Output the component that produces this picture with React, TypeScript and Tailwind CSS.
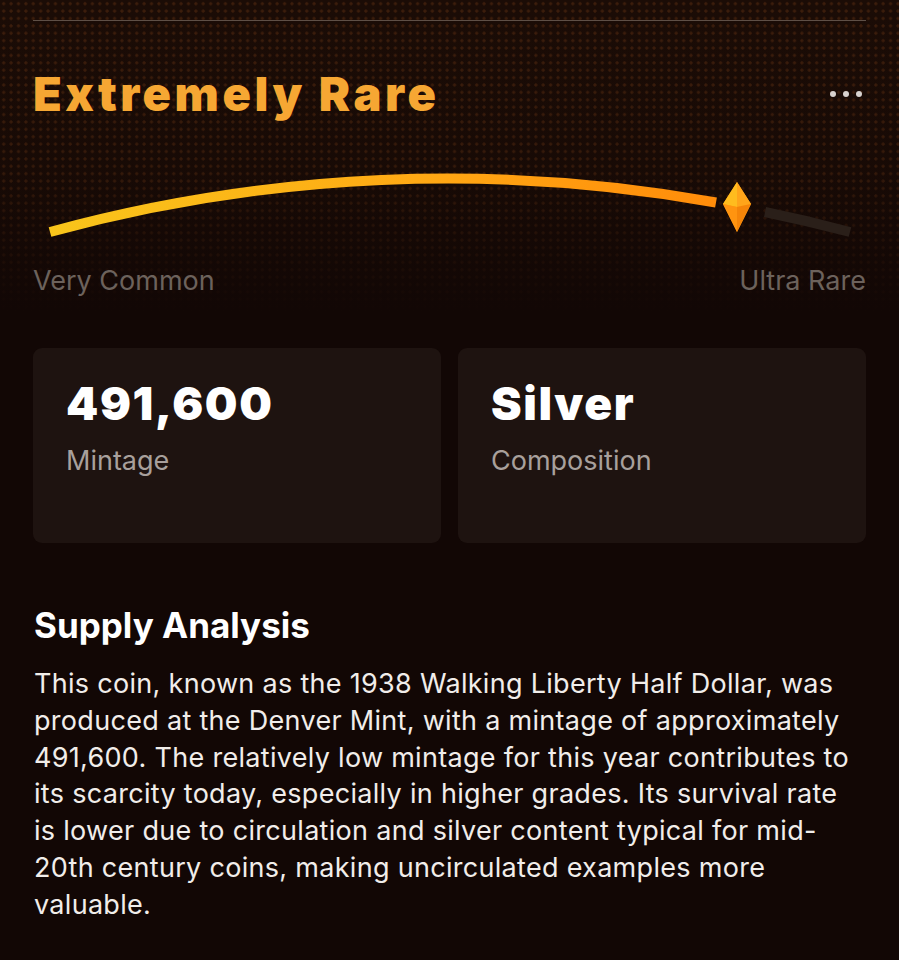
import React from 'react';

const stats = [
  { value: '491,600', label: 'Mintage' },
  { value: 'Silver', label: 'Composition' },
];

const RarityArc: React.FC = () => (
  <svg width="899" height="80" viewBox="0 170 899 80" className="block -mx-[33px]">
    <defs>
      <linearGradient id="arcFill" x1="50" y1="0" x2="716" y2="0" gradientUnits="userSpaceOnUse">
        <stop offset="0" stopColor="#F9C51B" />
        <stop offset="0.55" stopColor="#FFA914" />
        <stop offset="1" stopColor="#FF8C0A" />
      </linearGradient>
    </defs>
    {/* filled part of the scale */}
    <path d="M50 232 A1509 1509 0 0 1 716 202.5" fill="none" stroke="url(#arcFill)" strokeWidth="10" />
    {/* remaining part */}
    <path d="M765 212 A1509 1509 0 0 1 850 232" fill="none" stroke="#2a1f19" strokeWidth="10" />
    {/* gem marker */}
    <polygon points="737,182 751,204 737,232 723,204" fill="#FF9A0F" />
    <polygon points="737,182 751,204 737,207" fill="#FFA51A" />
    <polygon points="737,182 737,207 723,204" fill="#FFBC1E" />
    <polygon points="723,204 737,207 737,232" fill="#FF9410" />
    <polygon points="751,204 737,207 737,232" fill="#F58509" />
  </svg>
);

export default function App() {
  return (
    <div className="min-h-[960px] w-full bg-[#120705] font-['Inter','Liberation_Sans',sans-serif] text-white">
      <div className="px-[33px] pt-[20px] pb-[14px] bg-[linear-gradient(to_bottom,rgba(18,7,5,0)_0%,rgba(18,7,5,0.15)_55%,#120705_100%),radial-gradient(circle,rgba(120,60,22,0.36)_1.3px,transparent_1.8px),linear-gradient(#1b0c06,#170a05)] bg-[length:100%_100%,7.4px_7.4px,100%_100%]">
        <div className="h-px bg-[#5e4f46]" />
        <div className="flex items-center justify-between mt-[49px]">
          <h1 className="text-[47px] leading-[48px] font-black text-[#F6A733] tracking-[3.5px]">
            Extremely Rare
          </h1>
          <div className="flex gap-[7px] pr-[4px]">
            <span className="w-[6px] h-[6px] rounded-full bg-[#d8d2cf]" />
            <span className="w-[6px] h-[6px] rounded-full bg-[#d8d2cf]" />
            <span className="w-[6px] h-[6px] rounded-full bg-[#d8d2cf]" />
          </div>
        </div>
        <div className="mt-[52px]">
          <RarityArc />
        </div>
        <div className="flex justify-between mt-[15px] text-[27px] leading-[32px] text-[#6c625c]">
          <span>Very Common</span>
          <span>Ultra Rare</span>
        </div>
      </div>

      <div className="px-[33px] grid grid-cols-2 gap-[17px] mt-[37px]">
        {stats.map((s) => (
          <div key={s.label} className="h-[195px] rounded-[9px] bg-[#1e1310] px-[33px] pt-[29px]">
            <div className="text-[46px] leading-[52px] font-black text-white tracking-[1.6px]">{s.value}</div>
            <div className="mt-[16px] text-[27px] leading-[32px] text-[#a8a09c]">{s.label}</div>
          </div>
        ))}
      </div>

      <div className="pl-[34px] pr-[39px] pt-[62px] pb-[40px]">
        <h2 className="text-[35px] leading-[40px] font-bold text-white">Supply Analysis</h2>
        <p className="mt-[21px] text-[27px] leading-[36.8px] tracking-[0.3px] text-[#f1edea]">
          This coin, known as the 1938 Walking Liberty Half Dollar, was produced at the Denver Mint, with a mintage of
          approximately 491,600. The relatively low mintage for this year contributes to its scarcity today, especially
          in higher grades. Its survival rate is lower due to circulation and silver content typical for mid-20th
          century coins, making uncirculated examples more valuable.
        </p>
      </div>
    </div>
  );
}
